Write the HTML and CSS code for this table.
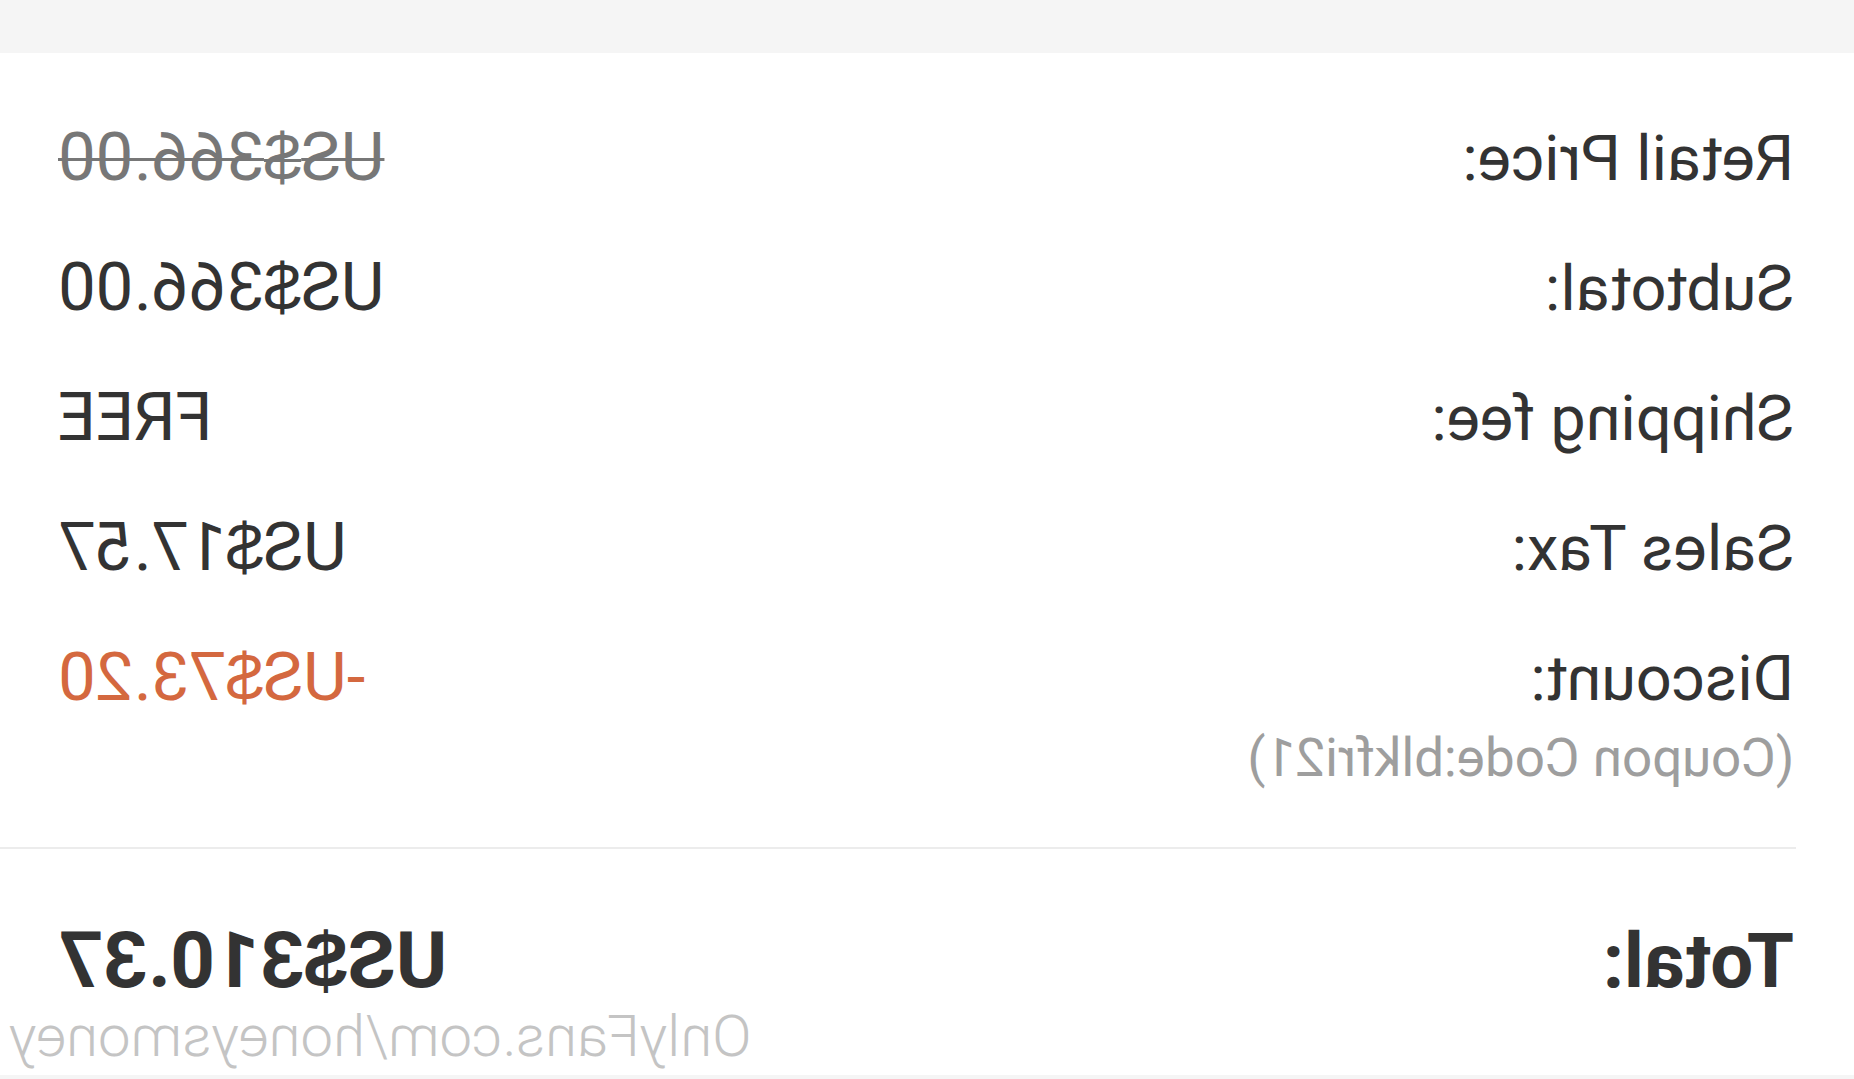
FILE: index.html
```html
<!DOCTYPE html>
<html lang="en">
<head>
  <meta charset="UTF-8">
  <meta name="viewport" content="width=device-width, initial-scale=1">
  <title>Order Summary</title>
  <link rel="stylesheet" href="styles.css">
</head>
<body>
  <!-- the screenshot is a mirrored capture, so the whole page is flipped -->
  <div class="page">
    <div class="topbar"></div>

    <div class="card">
      <div class="rows">
        <div class="row">
          <span class="label">Retail Price:</span>
          <span class="value retail">US<span class="cur">$</span>366.00</span>
        </div>
        <div class="row">
          <span class="label">Subtotal:</span>
          <span class="value">US<span class="cur">$</span>366.00</span>
        </div>
        <div class="row">
          <span class="label">Shipping fee:</span>
          <span class="value">FREE</span>
        </div>
        <div class="row">
          <span class="label">Sales Tax:</span>
          <span class="value">US<span class="cur">$</span>17.57</span>
        </div>
        <div class="row">
          <div class="label">
            Discount:
            <div class="coupon">(Coupon Code:blkfri21)</div>
          </div>
          <span class="value discount">-US<span class="cur">$</span>73.20</span>
        </div>
      </div>

      <div class="divider"></div>

      <div class="row total">
        <span class="label">Total:</span>
        <span class="value">US<span class="cur">$</span>310.37</span>
      </div>

      <div class="watermark">OnlyFans.com/honeysmoney</div>
    </div>
  </div>
</body>
</html>
```

FILE: styles.css
```css
* { margin:0; padding:0; box-sizing:border-box; }
html, body { width:100%; height:100%; background:#f5f5f5; overflow:hidden; }
body { font-family:Roboto, "Noto Sans", sans-serif; color:#333; }

.page {
  width:1854px;
  height:1079px;
  transform:scaleX(-1);
}
.topbar { height:53px; background:#f5f5f5; }

.card {
  position:relative;
  height:1022px;
  background:#fff;
  padding-top:65px;
}

.rows {
  display:flex;
  flex-direction:column;
  gap:50px;
}
.row {
  display:flex;
  justify-content:space-between;
  align-items:baseline;
  padding:0 58px 0 60px;
}
.label { font-size:63px; line-height:78px; color:#333; }
.value { font-size:67px; line-height:78px; color:#333; }
.cur { font-family:"Liberation Sans", Arial, sans-serif; }
.retail { color:#777; text-decoration:line-through; text-decoration-thickness:3px; }
.discount { color:#d4683f; }
.coupon {
  margin-top:8px;
  font-size:53px;
  line-height:64px;
  color:#9e9e9e;
}

.divider {
  height:2px;
  margin:57px 0 0 58px;
  background:#ececec;
}

.total { margin-top:64px; }
.total .label { font-size:76px; line-height:94px; font-weight:700; }
.total .value { font-size:78px; line-height:94px; font-weight:700; }

.watermark {
  position:absolute;
  right:9px;
  top:954px;
  font-size:58px;
  line-height:58px;
  font-weight:300;
  color:#c4c4c4;
  white-space:nowrap;
}
```
